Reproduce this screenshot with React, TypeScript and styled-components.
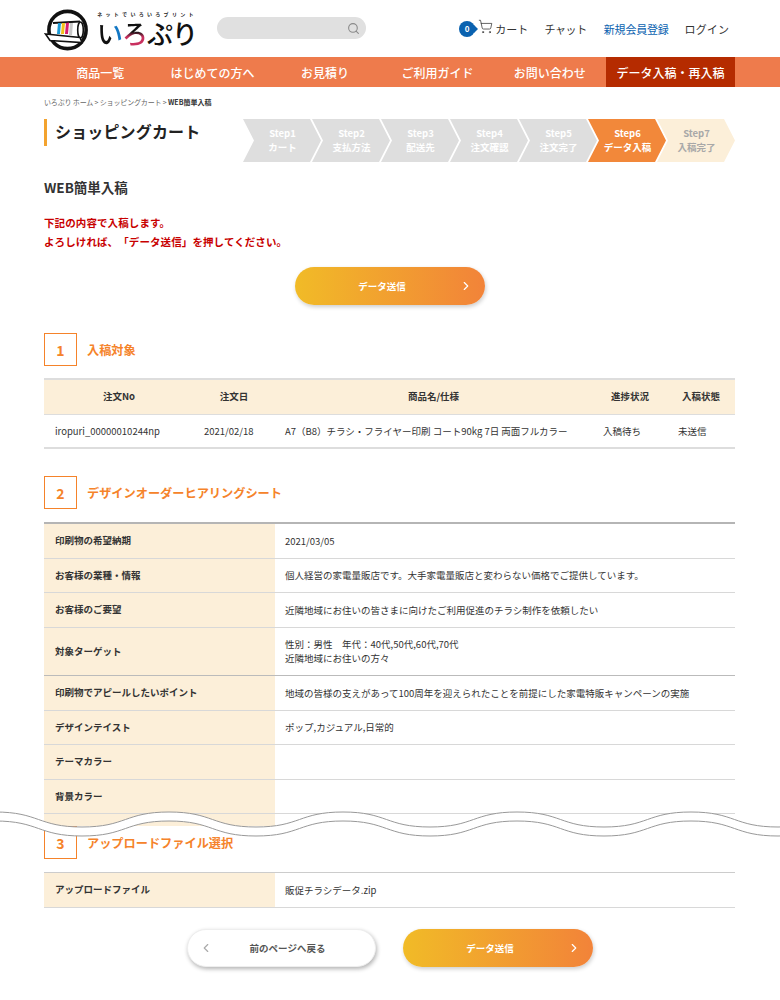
import React from 'react';
import styled, { createGlobalStyle } from 'styled-components';
import { ChevronLeft, ChevronRight, Search, ShoppingCart } from 'lucide-react';

const FONT = '"Noto Sans CJK JP", "Noto Sans", sans-serif';

const GlobalStyle = createGlobalStyle`
  html, body { margin: 0; padding: 0; background: #fff; }
  body { font-family: ${FONT}; color: #333; }
  * { box-sizing: border-box; }
`;

const navItems = ['商品一覧', 'はじめての方へ', 'お見積り', 'ご利用ガイド', 'お問い合わせ'];

const steps = [
  { no: 'Step1', label: 'カート' },
  { no: 'Step2', label: '支払方法' },
  { no: 'Step3', label: '配送先' },
  { no: 'Step4', label: '注文確認' },
  { no: 'Step5', label: '注文完了' },
  { no: 'Step6', label: 'データ入稿', state: 'active' },
  { no: 'Step7', label: '入稿完了', state: 'next' },
];

const hearing = [
  { label: '印刷物の希望納期', value: ['2021/03/05'] },
  { label: 'お客様の業種・情報', value: ['個人経営の家電量販店です。大手家電量販店と変わらない価格でご提供しています。'] },
  { label: 'お客様のご要望', value: ['近隣地域にお住いの皆さまに向けたご利用促進のチラシ制作を依頼したい'] },
  { label: '対象ターゲット', value: ['性別：男性　年代：40代,50代,60代,70代', '近隣地域にお住いの方々'] },
  { label: '印刷物でアピールしたいポイント', value: ['地域の皆様の支えがあって100周年を迎えられたことを前提にした家電特販キャンペーンの実施'] },
  { label: 'デザインテイスト', value: ['ポップ,カジュアル,日常的'] },
  { label: 'テーマカラー', value: [] },
  { label: '背景カラー', value: [] },
];

function Logo() {
  return (
    <svg width="46" height="44" viewBox="0 0 46 44">
      <circle cx="23.5" cy="23" r="18.6" fill="#fff" stroke="#111" strokeWidth="3.6" />
      <path d="M9 15 L37 14 L37 30 L9 28 Z" fill="#fff" />
      <path d="M9 16 L36 14.5" stroke="#111" strokeWidth="2.2" fill="none" />
      <path d="M14 16 L17 16 L16 27 L13 27 Z" fill="#1c9ad6" />
      <path d="M18 16 L21 16 L20 27 L17 27 Z" fill="#f3c21a" />
      <path d="M22 16 L25 15.5 L24 27 L21 27 Z" fill="#d61f6e" />
      <path d="M26 15.5 L29 15.5 L28 28 L25 28 Z" fill="#222" opacity="0.25" />
      <ellipse cx="36.5" cy="23" rx="2.8" ry="8" fill="#fff" stroke="#111" strokeWidth="1.6" />
      <path d="M1.5 27 L36 30.5 L38 35.5 L6 33.5 Z" fill="#fff" stroke="#111" strokeWidth="1.6" />
    </svg>
  );
}

const WAVE_START = -179;
const WAVE_PERIOD = 174;
const WAVE_COUNT = 7;

function waveForward(y: number) {
  let p = `M ${WAVE_START} ${y}`;
  for (let i = 0; i < WAVE_COUNT; i++) {
    const x = WAVE_START + i * WAVE_PERIOD;
    p += ` C ${x + 44} ${y}, ${x + 43} ${y + 15}, ${x + 87} ${y + 15} S ${x + 130} ${y}, ${x + 174} ${y}`;
  }
  return p;
}

function waveBackward(y: number) {
  let p = '';
  for (let i = WAVE_COUNT - 1; i >= 0; i--) {
    const x = WAVE_START + i * WAVE_PERIOD;
    p += ` C ${x + 130} ${y}, ${x + 131} ${y + 15}, ${x + 87} ${y + 15} S ${x + 44} ${y}, ${x} ${y}`;
  }
  return p;
}

function Wave() {
  const upper = waveForward(2);
  const lower = waveForward(11);
  return (
    <WaveSvg width="780" height="30" viewBox="0 0 780 30">
      <WaveBand d={`${upper} L ${WAVE_START + WAVE_COUNT * WAVE_PERIOD} 11 ${waveBackward(11)} Z`} />
      <WaveLine d={upper} />
      <WaveLine d={lower} />
    </WaveSvg>
  );
}

function SectionHeading({ no, children }: { no: number; children: React.ReactNode }) {
  return (
    <Heading>
      <NumberBox>{no}</NumberBox>
      <HeadingText>{children}</HeadingText>
    </Heading>
  );
}

export default function App() {
  return (
    <Page>
      <GlobalStyle />
      <Header>
        <LogoLink>
          <Logo />
          <LogoText>
            <Tagline>ネットでいろいろプリント</Tagline>
            <LogoName>
              <LogoI>い</LogoI>
              <LogoRo>ろ</LogoRo>ぷり
            </LogoName>
          </LogoText>
        </LogoLink>
        <SearchBox>
          <Search size={13} color="#8a8a8a" strokeWidth={2} />
        </SearchBox>
        <HeaderNav>
          <CartLink>
            <CartBadge>0</CartBadge>
            <CartIcon>
              <ShoppingCart size={15} strokeWidth={1.2} color="#333" />
            </CartIcon>
            <span>カート</span>
          </CartLink>
          <HeaderLink $spacing={-0.4}>チャット</HeaderLink>
          <HeaderLink $blue $spacing={-0.2}>新規会員登録</HeaderLink>
          <HeaderLink $spacing={0.1}>ログイン</HeaderLink>
        </HeaderNav>
      </Header>

      <NavBar>
        <NavInner>
          {navItems.map((item) => (
            <NavItem key={item}>{item}</NavItem>
          ))}
          <NavItem $active>データ入稿・再入稿</NavItem>
        </NavInner>
      </NavBar>

      <Main>
        <Breadcrumb>
          いろぷり ホーム &gt; ショッピングカート &gt; <strong>WEB簡単入稿</strong>
        </Breadcrumb>

        <TitleRow>
          <PageTitle>ショッピングカート</PageTitle>
          <Steps>
            {steps.map((s) => (
              <Step key={s.no} $state={s.state}>
                <span>{s.no}</span>
                <span>{s.label}</span>
              </Step>
            ))}
          </Steps>
        </TitleRow>

        <SubTitle>WEB簡単入稿</SubTitle>
        <Notice>
          下記の内容で入稿します。
          <br />
          よろしければ、「データ送信」を押してください。
        </Notice>

        <TopAction>
          <PrimaryButton>
            データ送信
            <ButtonIconRight>
              <ChevronRight size={14} strokeWidth={2} />
            </ButtonIconRight>
          </PrimaryButton>
        </TopAction>

        <SectionHeading no={1}>入稿対象</SectionHeading>
        <OrderTable>
          <colgroup>
            <col width="150" />
            <col width="80" />
            <col width="319" />
            <col width="74" />
            <col width="68" />
          </colgroup>
          <thead>
            <tr>
              <th>注文No</th>
              <th>注文日</th>
              <th>商品名/仕様</th>
              <th>進捗状況</th>
              <th>入稿状態</th>
            </tr>
          </thead>
          <tbody>
            <tr>
              <td>iropuri_00000010244np</td>
              <td>2021/02/18</td>
              <td>A7（B8）チラシ・フライヤー印刷 コート90kg 7日 両面フルカラー</td>
              <td>入稿待ち</td>
              <td>未送信</td>
            </tr>
          </tbody>
        </OrderTable>

        <SecondHeading>
          <SectionHeading no={2}>デザインオーダーヒアリングシート</SectionHeading>
        </SecondHeading>
        <SheetTable>
          {hearing.map((row) => (
            <SheetRow key={row.label}>
              <SheetLabel>{row.label}</SheetLabel>
              <SheetValue>
                {row.value.map((line) => (
                  <div key={line}>{line}</div>
                ))}
              </SheetValue>
            </SheetRow>
          ))}
          <CutRow />
        </SheetTable>

        <CutAnchor>
          <Wave />
        </CutAnchor>

        <SectionHeading no={3}>アップロードファイル選択</SectionHeading>
        <UploadTable>
          <SheetRow>
            <SheetLabel>アップロードファイル</SheetLabel>
            <SheetValue>販促チラシデータ.zip</SheetValue>
          </SheetRow>
        </UploadTable>

        <BottomActions>
          <BackButton>
            <ButtonIconLeft>
              <ChevronLeft size={14} strokeWidth={2} />
            </ButtonIconLeft>
            前のページへ戻る
          </BackButton>
          <PrimaryButton>
            データ送信
            <ButtonIconRight>
              <ChevronRight size={14} strokeWidth={2} />
            </ButtonIconRight>
          </PrimaryButton>
        </BottomActions>
      </Main>
    </Page>
  );
}

const Page = styled.div`
  width: 780px;
  height: 1000px;
  overflow: hidden;
`;

const Header = styled.header`
  height: 57px;
  display: flex;
  align-items: center;
  padding: 0 51px 0 44px;
`;

const LogoLink = styled.div`
  display: flex;
  align-items: center;
  gap: 7px;
  width: 173px;
`;

const LogoText = styled.div`
  display: flex;
  flex-direction: column;
  align-items: center;
`;

const Tagline = styled.div`
  font-size: 5px;
  line-height: 7px;
  font-weight: 700;
  letter-spacing: 3.3px;
  white-space: nowrap;
  color: #222;
`;

const LogoName = styled.div`
  margin-top: 2px;
  font-size: 26px;
  line-height: 28px;
  font-weight: 500;
  letter-spacing: -1px;
  color: #111;
`;

const LogoI = styled.span`
  background: linear-gradient(90deg, #111 58%, #1277c4 64%);
  -webkit-background-clip: text;
  background-clip: text;
  color: transparent;
`;

const LogoRo = styled.span`
  background: linear-gradient(180deg, #111 48%, #c9305f 62%);
  -webkit-background-clip: text;
  background-clip: text;
  color: transparent;
`;

const SearchBox = styled.div`
  width: 149px;
  height: 22px;
  margin-top: -1px;
  border-radius: 11px;
  background: #e0e0e0;
  display: flex;
  align-items: center;
  justify-content: flex-end;
  padding-right: 6px;
`;

const HeaderNav = styled.nav`
  margin-left: auto;
  display: flex;
  align-items: center;
  gap: 17px;
  font-size: 11px;
  color: #333;
`;

const CartLink = styled.div`
  display: flex;
  align-items: center;
  gap: 2px;
  margin-right: -1px;
  letter-spacing: 0.1px;
`;

const CartIcon = styled.span`
  height: 15px;
  margin-top: -5px;
`;

const CartBadge = styled.span`
  position: relative;
  width: 16px;
  height: 16px;
  margin-right: 1px;
  border-radius: 50%;
  background: #0a62b0;
  color: #fff;
  font-size: 8px;
  font-weight: 700;
  display: flex;
  align-items: center;
  justify-content: center;
  &::after {
    content: '';
    position: absolute;
    right: -3px;
    top: 4px;
    border-left: 4px solid #0a62b0;
    border-top: 4px solid transparent;
    border-bottom: 4px solid transparent;
  }
`;

const HeaderLink = styled.span<{ $blue?: boolean; $spacing: number }>`
  color: ${(p) => (p.$blue ? '#0a62b0' : '#333')};
  letter-spacing: ${(p) => p.$spacing}px;
  margin-right: ${(p) => (p.$blue ? '-1px' : '0')};
`;

const NavBar = styled.div`
  height: 30px;
  background: #ee7b4c;
`;

const NavInner = styled.div`
  width: 691px;
  height: 30px;
  margin-left: 44px;
  display: grid;
  grid-template-columns: repeat(5, 1fr) 129px;
`;

const NavItem = styled.div<{ $active?: boolean }>`
  display: flex;
  align-items: center;
  justify-content: center;
  font-size: 12px;
  font-weight: 500;
  color: #fff;
  white-space: nowrap;
  background: ${(p) => (p.$active ? '#b52b00' : 'transparent')};
`;

const Main = styled.main`
  padding: 0 45px 0 44px;
`;

const Breadcrumb = styled.div`
  height: 32px;
  padding-top: 9px;
  font-size: 7px;
  line-height: 12px;
  letter-spacing: -0.15px;
  color: #666;
  strong {
    color: #333;
    font-weight: 700;
    letter-spacing: 0;
  }
`;

const TitleRow = styled.div`
  display: flex;
  justify-content: space-between;
  align-items: flex-start;
`;

const PageTitle = styled.h1`
  margin: 0;
  height: 27px;
  padding-left: 8px;
  border-left: 3px solid #f3a32f;
  font-size: 16px;
  line-height: 25px;
  font-weight: 700;
  letter-spacing: 0.15px;
  color: #222;
`;

const Steps = styled.ol`
  display: flex;
  margin: 0 -1px 0 0;
  padding: 0;
  list-style: none;
`;

const Step = styled.li<{ $state?: string }>`
  width: 79px;
  height: 43px;
  margin-right: -10px;
  padding-bottom: 2px;
  display: flex;
  flex-direction: column;
  align-items: center;
  justify-content: center;
  font-size: 9.5px;
  line-height: 14px;
  font-weight: 700;
  white-space: nowrap;
  clip-path: polygon(0 0, 67px 0, 78px 50%, 67px 100%, 0 100%, 11px 50%);
  background: ${(p) =>
    p.$state === 'active' ? '#f2883a' : p.$state === 'next' ? '#fcefd9' : '#dedede'};
  color: ${(p) => (p.$state === 'next' ? '#a8a8a8' : '#fff')};
  &:last-child {
    margin-right: 0;
  }
`;

const SubTitle = styled.h2`
  margin: 16px 0 0;
  font-size: 13.5px;
  line-height: 19px;
  font-weight: 700;
  color: #333;
`;

const Notice = styled.p`
  margin: 16px 0 0;
  font-size: 10.5px;
  line-height: 19px;
  font-weight: 700;
  letter-spacing: 0.1px;
  text-spacing-trim: space-all;
  color: #c80000;
`;

const TopAction = styled.div`
  display: flex;
  justify-content: center;
  margin: 16px 0 28px;
`;

const Pill = styled.button`
  position: relative;
  width: 190px;
  height: 38px;
  border: 0;
  border-radius: 19px;
  font-family: ${FONT};
  font-size: 9.5px;
  font-weight: 700;
  display: flex;
  align-items: center;
  justify-content: center;
`;

const PrimaryButton = styled(Pill)`
  padding: 0 15px 0 0;
  background: linear-gradient(90deg, #f1bb27, #f28339);
  color: #fff;
  box-shadow: 1px 2px 4px rgba(0, 0, 0, 0.2);
`;

const BackButton = styled(Pill)`
  width: 189px;
  padding: 0 0 0 13px;
  background: #fff;
  border: 1px solid #eee;
  color: #555;
  box-shadow: 1px 2px 4px rgba(0, 0, 0, 0.3);
`;

const ButtonIconRight = styled.span`
  position: absolute;
  right: 12px;
  top: 12px;
  height: 14px;
`;

const ButtonIconLeft = styled.span`
  position: absolute;
  left: 11px;
  top: 11px;
  height: 14px;
  color: #aaa;
`;

const Heading = styled.div`
  display: flex;
  align-items: center;
  gap: 10px;
`;

const SecondHeading = styled.div`
  margin-top: 27px;
`;

const NumberBox = styled.div`
  width: 33px;
  height: 33px;
  border: 1px solid #f5832a;
  color: #f5832a;
  font-size: 14px;
  font-weight: 700;
  display: flex;
  align-items: center;
  justify-content: center;
`;

const HeadingText = styled.h3`
  margin: 0;
  font-size: 12.2px;
  font-weight: 700;
  color: #f5832a;
`;

const OrderTable = styled.table`
  width: 691px;
  margin-top: 12px;
  table-layout: fixed;
  border-collapse: collapse;
  font-size: 9.5px;
  th {
    height: 35px;
    padding: 0 0 1px;
    background: #fcefd9;
    border-top: 2px solid #ddd;
    border-bottom: 1px solid #ddd;
    font-weight: 700;
    color: #333;
  }
  td {
    height: 34px;
    padding: 0 0 0 11px;
    border-bottom: 2px solid #ddd;
    white-space: nowrap;
    color: #333;
  }
  td:nth-child(2),
  td:nth-child(4) {
    padding-left: 10px;
  }
`;

const SheetTable = styled.div`
  margin-top: 13px;
  border-top: 2px solid #b5b5b5;
`;

const UploadTable = styled.div`
  margin-top: 13px;
  border-top: 1px solid #ccc;
`;

const SheetRow = styled.div`
  display: grid;
  grid-template-columns: 231px 1fr;
  border-bottom: 1px solid #d8d8d8;
  font-size: 9.5px;
  line-height: 14px;
  &:nth-child(4) {
    border-bottom-color: #bbb;
  }
`;

const SheetLabel = styled.div`
  min-height: 33.5px;
  padding: 0 11px 1px;
  display: flex;
  align-items: center;
  background: #fcefd9;
  font-weight: 700;
  color: #333;
`;

const SheetValue = styled.div`
  padding: 9.5px 10px 10px;
  color: #333;
`;

const CutRow = styled.div`
  width: 231px;
  height: 12px;
  background: #fcefd9;
`;

const CutAnchor = styled.div`
  position: relative;
  height: 0;
`;

const WaveSvg = styled.svg`
  position: absolute;
  left: -44px;
  top: -16px;
  z-index: 2;
`;

const WaveBand = styled.path`
  fill: #fff;
  stroke: none;
`;

const WaveLine = styled.path`
  fill: none;
  stroke: #999;
  stroke-width: 1;
`;

const BottomActions = styled.div`
  display: flex;
  justify-content: center;
  gap: 27px;
  margin-top: 21px;
`;
